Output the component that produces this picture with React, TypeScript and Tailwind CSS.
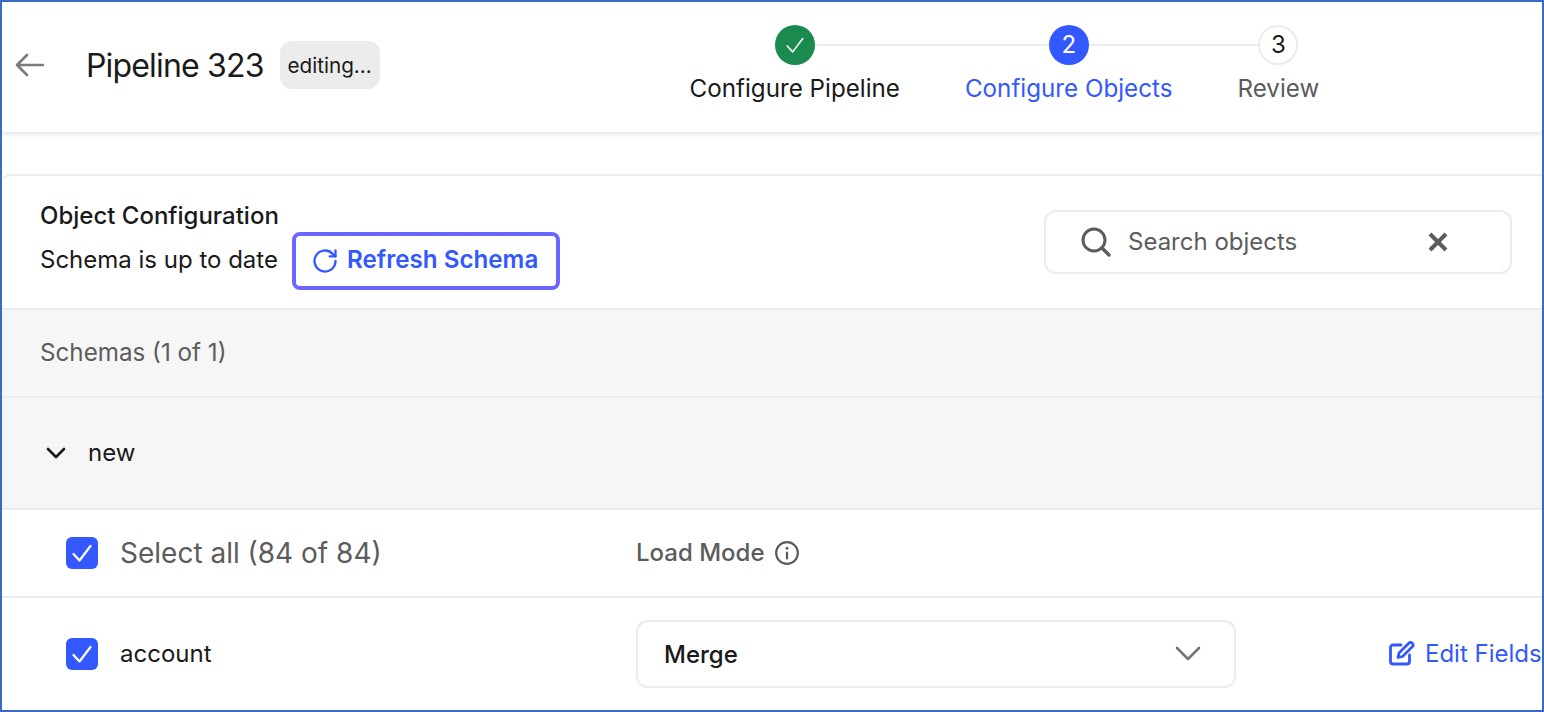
import React from "react";

function Check({ size = 24, stroke = 2 }: { size?: number; stroke?: number }) {
  return (
    <svg width={size} height={size} viewBox="0 0 24 24" fill="none" stroke="white" strokeWidth={stroke} strokeLinecap="round" strokeLinejoin="round">
      <path d="M3.5 13 L9.5 19.5 L20.5 5" />
    </svg>
  );
}

function Checkbox() {
  return (
    <div className="w-8 h-8 rounded-md bg-[#3358ff] flex items-center justify-center shrink-0">
      <Check size={24} stroke={2.2} />
    </div>
  );
}

export default function App() {
  return (
    <div className="h-[712px] w-[1544px] overflow-hidden border-2 border-[#3a6bc5] bg-white font-['Inter',sans-serif] text-[#1a1a1a]">
      <header className="relative z-10 flex h-[130px] items-start shadow-[0_2px_5px_rgba(0,0,0,0.12)]">
        <div className="mt-[38px] flex items-center">
          <svg className="ml-[12px]" width="32" height="28" viewBox="0 0 32 28" fill="none" stroke="#7a7a7a" strokeWidth="2.6" strokeLinecap="round" strokeLinejoin="round">
            <path d="M29 14 H3 M13 4 L3 14 L13 24" />
          </svg>
          <h1 className="ml-[40px] mt-[2px] text-[32px] leading-[48px] font-normal tracking-[-0.83px]">Pipeline 323</h1>
          <span className="ml-[16px] flex h-12 w-[100px] items-center justify-center rounded-xl bg-[#ececec] pt-[2px] text-[20.7px]">editing...</span>
        </div>
        <div className="relative ml-[310px] mt-[23px] flex gap-[65px]">
          <div className="absolute left-[105px] right-[41px] top-[19px] h-0.5 bg-[#ececec]" />
          <div className="relative flex flex-col items-center gap-[9px]">
            <div className="flex h-10 w-10 items-center justify-center rounded-full bg-[#1b8a4f]">
              <Check size={22} stroke={1.7} />
            </div>
            <span className="text-[24.2px] leading-[30px] whitespace-nowrap">Configure Pipeline</span>
          </div>
          <div className="relative flex flex-col items-center gap-[9px]">
            <div className="flex h-10 w-10 items-center justify-center rounded-full bg-[#3358ff] text-2xl text-white">2</div>
            <span className="text-[24.2px] leading-[30px] whitespace-nowrap text-[#3358ff]">Configure Objects</span>
          </div>
          <div className="relative flex flex-col items-center gap-[9px]">
            <div className="flex h-10 w-10 items-center justify-center rounded-full border-2 border-[#ececec] bg-white text-2xl">3</div>
            <span className="text-[24.2px] leading-[30px] whitespace-nowrap text-[#5c5c5c]">Review</span>
          </div>
        </div>
      </header>

      <main className="mt-[42px] rounded-tl-lg border-t-2 border-[#ececec]">
        <section className="flex h-[134px] items-center border-b-2 border-[#ececec] pr-[30px] pl-[38px]">
          <div className="pt-[7px]">
            <div className="mb-[2px] text-2xl leading-[28px] font-medium">Object Configuration</div>
            <div className="flex items-center gap-[14px]">
              <span className="mt-[-2px] text-2xl leading-[30px]">Schema is up to date</span>
              <button className="flex h-[58px] w-[268px] items-center justify-start gap-[8px] rounded-lg border-4 border-[#6a66ff] pl-[15px] text-[24.2px] font-semibold text-[#3358ff]">
                <svg width="28" height="28" viewBox="0 0 24 24" fill="none" stroke="#3358ff" strokeWidth="2" strokeLinecap="round" strokeLinejoin="round">
                  <path d="M21 12a9 9 0 1 1-2.64-6.36L21 8" />
                  <path d="M21 3v5h-5" />
                </svg>
                Refresh Schema
              </button>
            </div>
          </div>
          <div className="ml-auto flex h-16 w-[468px] items-center rounded-xl border-2 border-[#ececec] pl-[34px] pr-[62px]">
            <svg width="32" height="32" viewBox="0 0 32 32" fill="none" stroke="#5c5c5c" strokeWidth="3" strokeLinecap="round">
              <circle cx="14" cy="14" r="11" />
              <path d="M22 22 L29 29" strokeWidth="3.4" />
            </svg>
            <span className="ml-[16px] mt-[-1px] text-2xl text-[#5c5c5c]">Search objects</span>
            <svg className="ml-auto" width="20" height="20" viewBox="0 0 20 20" fill="none" stroke="#5c5c5c" strokeWidth="4">
              <path d="M2 2 L18 18 M18 2 L2 18" />
            </svg>
          </div>
        </section>

        <section className="flex h-[88px] items-center border-b-2 border-[#ececec] bg-[#f6f6f6] pl-[38px] text-[24.2px] text-[#5c5c5c]">
          Schemas (1 of 1)
        </section>

        <section className="flex h-[112px] items-center border-b-2 border-[#ececec] bg-[#f6f6f6] pl-[44px] text-2xl">
          <svg width="20" height="12" viewBox="0 0 20 12" fill="none" stroke="#1a1a1a" strokeWidth="2.6" strokeLinecap="round" strokeLinejoin="round">
            <path d="M2 2 L10 10 L18 2" />
          </svg>
          <span className="ml-[22px]">new</span>
        </section>

        <section className="flex h-[88px] items-center border-b-2 border-[#ececec] pl-[64px]">
          <Checkbox />
          <span className="ml-[22px] w-[516px] text-[28px] text-[#5c5c5c]">Select all (84 of 84)</span>
          <span className="text-2xl font-medium text-[#5c5c5c]">Load Mode</span>
          <svg className="ml-[9px]" width="26" height="26" viewBox="0 0 24 24" fill="none" stroke="#5c5c5c" strokeWidth="2" strokeLinecap="round">
            <circle cx="12" cy="12" r="10" />
            <path d="M12 11.5 V17" />
            <path d="M12 7.5 V7.6" strokeWidth="2.6" />
          </svg>
        </section>

        <section className="flex h-[112px] items-center pl-[64px] whitespace-nowrap">
          <Checkbox />
          <span className="ml-[22px] w-[516px] text-2xl">account</span>
          <div className="flex h-[68px] w-[600px] items-center justify-between rounded-xl border-2 border-[#ececec] pl-[26px] pr-[33px] text-2xl font-medium">
            <span className="mt-[1px]">Merge</span>
            <svg width="26" height="16" viewBox="0 0 26 16" fill="none" stroke="#767676" strokeWidth="2.6" strokeLinecap="round" strokeLinejoin="round">
              <path d="M2 2 L13 13 L24 2" />
            </svg>
          </div>
          <svg className="ml-[153px] mt-[-2px]" width="26" height="26" viewBox="0 0 26 26" fill="none" stroke="#3358ff" strokeWidth="2.8" strokeLinecap="round" strokeLinejoin="round">
            <path d="M12 5 H4 a2.5 2.5 0 0 0 -2.5 2.5 V21.5 A2.5 2.5 0 0 0 4 24 H18 a2.5 2.5 0 0 0 2.5 -2.5 V15" />
            <path d="M20.5 2.5 a2.8 2.8 0 0 1 3.5 3.5 L13.5 16.5 L9 17.5 L10 13 Z" />
          </svg>
          <span className="ml-[10px] text-2xl text-[#3358ff]">Edit Fields</span>
        </section>
      </main>
    </div>
  );
}
